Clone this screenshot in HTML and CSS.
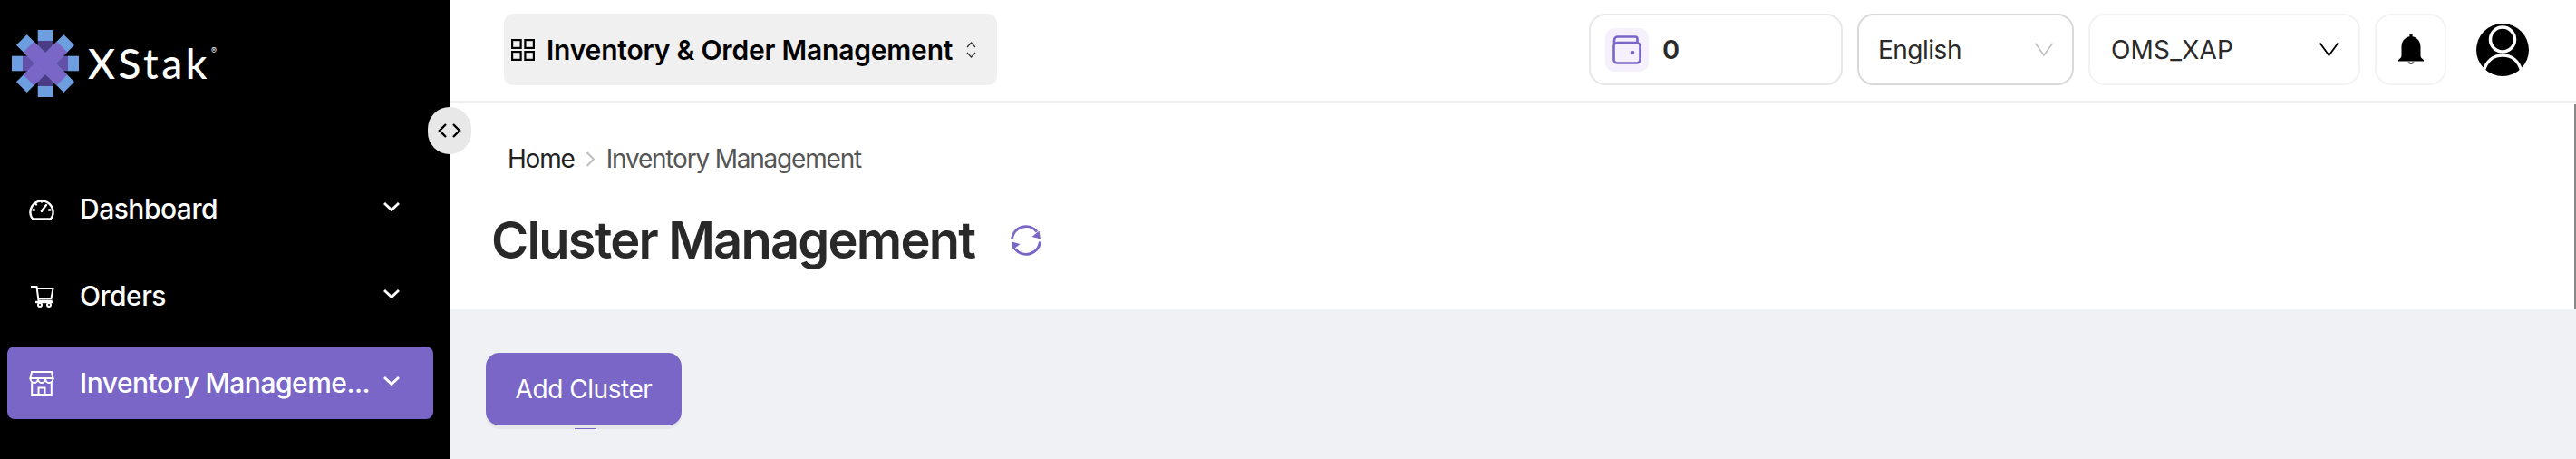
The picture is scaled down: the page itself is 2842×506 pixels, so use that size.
FILE: index.html
```html
<!DOCTYPE html>
<html lang="en">
    <head>
        <meta charset="UTF-8" />
        <title>Cluster Management</title>
        <link rel="stylesheet" href="styles.css">
    </head>
    <body>
        <div class="app">
            <aside class="sidebar">
                <div class="logo">
                    <svg class="logo-mark" width="74" height="74" viewBox="-37 -37 74 74">
                        <g id="spokes">
                            <g><rect x="-8.3" y="-37" width="16.6" height="12" fill="#6d9ee0"/><rect x="-8.3" y="-25" width="16.6" height="25" fill="#4b3d85"/></g>
                            <g transform="rotate(180)"><rect x="-8.3" y="-37" width="16.6" height="12" fill="#6d9ee0"/><rect x="-8.3" y="-25" width="16.6" height="25" fill="#4b3d85"/></g>
                            <g transform="rotate(90)"><rect x="-8.3" y="-37" width="16.6" height="12" fill="#6d9ee0"/><rect x="-8.3" y="-25" width="16.6" height="25" fill="#6350a8"/></g>
                            <g transform="rotate(270)"><rect x="-8.3" y="-37" width="16.6" height="12" fill="#6d9ee0"/><rect x="-8.3" y="-25" width="16.6" height="25" fill="#6350a8"/></g>
                        </g>
                        <g transform="rotate(45)"><rect x="-8.3" y="-37" width="16.6" height="74" fill="#6d9ee0"/><rect x="-8.3" y="-26" width="16.6" height="52" fill="#7966c7"/></g>
                        <g transform="rotate(-45)"><rect x="-8.3" y="-37" width="16.6" height="74" fill="#6d9ee0"/><rect x="-8.3" y="-26" width="16.6" height="52" fill="#7966c7"/></g>
                        <rect x="-8.3" y="-8.3" width="16.6" height="16.6" fill="#7966c7" transform="rotate(45)"/>
                    </svg>
                    <span class="logo-name">XStak</span>
                    <span class="logo-reg">®</span>
                </div>
                <nav class="nav">
                    <a class="nav-item">
                        <svg class="nav-icon" width="28" height="28" viewBox="0 0 28 28" fill="none" stroke="#fff" stroke-width="2.4" stroke-linecap="round">
                            <path d="M5.5 25.5h17c1.500 0 2-.6 2.600-1.800A12.500 12.500 0 1 0 2.900 23.700c.6 1.200 1.100 1.800 2.600 1.800z"/>
                            <path d="M14 16.500l5-6.500"/>
                            <path d="M14 5v1.500M7 8.500l1 1M4.500 15.500h1.500M22 15.500h1.500"/>
                            <circle cx="14" cy="17" r="1.300" fill="#fff" stroke="none"/>
                        </svg>
                        <span class="nav-label">Dashboard</span>
                        <svg class="nav-chevron" width="18" height="10" viewBox="0 0 18 10" fill="none" stroke="#fff" stroke-width="2.800"><path d="M1 1l8 7.500L17 1"/></svg>
                    </a>
                    <a class="nav-item">
                        <svg class="nav-icon" width="28" height="28" viewBox="0 0 28 28" fill="none" stroke="#fff" stroke-width="2">
                            <path d="M2 4h6.500l2 15.500h15"/>
                            <path d="M8.800 6h17.700l-2 11H10.400"/>
                            <path d="M7 21h19" stroke-width="2.400"/>
                            <circle cx="12" cy="24" r="2"/>
                            <circle cx="22" cy="24" r="2"/>
                        </svg>
                        <span class="nav-label">Orders</span>
                        <svg class="nav-chevron" width="18" height="10" viewBox="0 0 18 10" fill="none" stroke="#fff" stroke-width="2.800"><path d="M1 1l8 7.500L17 1"/></svg>
                    </a>
                    <a class="nav-item active">
                        <svg class="nav-icon" width="28" height="28" viewBox="0 0 28 28" fill="none" stroke="#fff" stroke-width="2">
                            <path d="M3 2h22l1.500 7H1.500z"/>
                            <path d="M1.500 9c0 3 2 5 4.200 5s4-2 4.200-4c.2 2 2 4 4.100 4s3.900-2 4.100-4c.2 2 2 4 4.200 4s4.200-2 4.200-5"/>
                            <path d="M3.200 13.500V27h21.600V13.500"/>
                            <path d="M10.500 27v-7.500h7V27"/>
                        </svg>
                        <span class="nav-label">Inventory Manageme...</span>
                        <svg class="nav-chevron" width="18" height="10" viewBox="0 0 18 10" fill="none" stroke="#fff" stroke-width="2.800"><path d="M1 1l8 7.500L17 1"/></svg>
                    </a>
                </nav>
            </aside>

            <button class="collapse">
                <svg width="26" height="16" viewBox="0 0 26 16" fill="none" stroke="#000" stroke-width="2.400"><path d="M9 1L2 8l7 7"/><path d="M17 1l7 7-7 7"/></svg>
            </button>

            <main class="main">
                <header class="topbar">
                    <div class="module">
                        <svg width="26" height="24" viewBox="0 0 26 24" fill="none" stroke="#000" stroke-width="2.200">
                            <rect x="1.100" y="1.100" width="9.500" height="8.800"/>
                            <rect x="15.400" y="1.100" width="9.500" height="8.800"/>
                            <rect x="1.100" y="14.100" width="9.500" height="8.800"/>
                            <rect x="15.400" y="14.100" width="9.500" height="8.800"/>
                        </svg>
                        <span class="module-name">Inventory &amp; Order Management</span>
                        <svg class="module-sort" width="11" height="18" viewBox="0 0 11 18" fill="none" stroke="#333" stroke-width="1.200"><path d="M1 6l4.500-5L10 6"/><path d="M1 12l4.500 5 4.500-5"/></svg>
                    </div>
                    <div class="topbar-right">
                        <div class="box wallet">
                            <span class="wallet-icon">
                                <svg width="32" height="32" viewBox="0 0 32 32" fill="none" stroke="#7966c7" stroke-width="2.600">
                                    <path d="M2 9.500V5.500C2 3 3.500 1.500 6 1.500h19c1.500 0 2.500 1 2.500 2.500v4"/>
                                    <rect x="1.500" y="8" width="29" height="22.500" rx="4"/>
                                    <circle cx="22" cy="19" r="2.300" fill="#7966c7" stroke="none"/>
                                </svg>
                            </span>
                            <span class="wallet-count">0</span>
                        </div>
                        <div class="box lang">
                            <span>English</span>
                            <svg width="20" height="15" viewBox="0 0 20 15" fill="none" stroke="#bfbfbf" stroke-width="1.600"><path d="M.6 .6L10 14 19.400 .6"/></svg>
                        </div>
                        <div class="box store">
                            <span>OMS_XAP</span>
                            <svg width="21" height="15" viewBox="0 0 21 15" fill="none" stroke="#000" stroke-width="1.800"><path d="M.6 .6L10.500 14 20.400 .6"/></svg>
                        </div>
                        <div class="box bell">
                            <svg width="28" height="36" viewBox="0 0 28 36" fill="#000">
                                <path d="M14 0c1 0 1.600.7 1.600 1.800v1.400C21.500 4.300 24.500 9 24.500 15v9c0 2 1 3.500 3.500 5v1.500H0V29c2.500-1.500 3.500-3 3.500-5v-9C3.500 9 6.500 4.300 12.400 3.200V1.800C12.400.7 13 0 14 0z"/>
                                <path d="M10.500 31.500h2a1.800 1.800 0 0 0 3 0h2a3.800 3.800 0 0 1-7 0z"/>
                            </svg>
                        </div>
                        <svg class="avatar" width="58" height="58" viewBox="0 0 58 58">
                            <circle cx="29" cy="29" r="29" fill="#000"/>
                            <circle cx="29" cy="17.500" r="13.500" fill="none" stroke="#fff" stroke-width="3.500"/>
                            <path d="M8 53C11 41 19 35 29 35s18 6 21 18" fill="none" stroke="#fff" stroke-width="3.500"/>
                        </svg>
                    </div>
                </header>

                <section class="page-head">
                    <div class="breadcrumb">
                        <span class="crumb-home">Home</span>
                        <svg width="11" height="17" viewBox="0 0 11 17" fill="none" stroke="#bdbdbd" stroke-width="2"><path d="M1.500 1l7.500 7.500L1.500 16"/></svg>
                        <span class="crumb-current">Inventory Management</span>
                    </div>
                    <div class="title-row">
                        <h1 class="title">Cluster Management</h1>
                        <svg width="34" height="34" viewBox="0 0 34 34" fill="none" stroke="#7966c7" stroke-width="3">
                            <path d="M1.500 15.500A15.500 15.500 0 0 1 29 7.500"/>
                            <path d="M32.500 18.500A15.500 15.500 0 0 1 5 26.500"/>
                            <path d="M33 15.500l-9.500-2.500 8-6.500z" fill="#7966c7" stroke="none"/>
                            <path d="M1 18.500l9.500 2.500-8 6.500z" fill="#7966c7" stroke="none"/>
                        </svg>
                    </div>
                </section>

                <section class="content">
                    <div class="actions">
                        <button class="add-btn">Add Cluster</button>
                        <span class="hidden-link"></span>
                    </div>
                </section>
            </main>

            <div class="scroll-thumb"></div>
        </div>
    </body>
</html>
```

FILE: styles.css
```css
* {
    box-sizing: border-box;
}

html,
body {
    margin: 0;
    height: 100%;
    overflow: hidden;
    font-family: "Inter", "Liberation Sans", sans-serif;
}

.app {
    display: flex;
    position: relative;
    height: 506px;
}

/* sidebar */
.sidebar {
    width: 496px;
    flex-shrink: 0;
    background-color: #000;
    color: #fff;
}

.logo {
    display: flex;
    align-items: flex-start;
    padding: 33px 0 0 13px;
    height: 107px;
}

.logo-mark {
    flex-shrink: 0;
}

.logo-name {
    margin: 10px 0 0 10px;
    font-family: "Lato", sans-serif;
    font-size: 46px;
    line-height: 54px;
    font-weight: 500;
    letter-spacing: 3.5px;
}

.logo-reg {
    margin: 18px 0 0 1px;
    font-size: 9px;
    line-height: 10px;
}

.nav {
    display: flex;
    flex-direction: column;
    gap: 16px;
    margin: 83px 18px 0 8px;
}

.nav-item {
    display: flex;
    align-items: center;
    height: 80px;
    padding: 0 37px 0 24px;
    border-radius: 8px;
    font-size: 30px;
    font-weight: 500;
    letter-spacing: -0.5px;
}

.nav-item.active {
    background-color: #7966c7;
}

.nav-icon {
    flex-shrink: 0;
    margin-right: 28px;
}

.nav-label {
    white-space: nowrap;
}

.nav-chevron {
    flex-shrink: 0;
    margin: 0 0 4px auto;
}

.collapse {
    position: absolute;
    left: 472px;
    top: 118px;
    z-index: 2;
    display: flex;
    align-items: center;
    justify-content: center;
    width: 48px;
    height: 52px;
    padding: 0;
    border: 0;
    border-radius: 24px;
    background-color: #e8e8e8;
}

/* main */
.main {
    flex: 1;
    min-width: 0;
    display: flex;
    flex-direction: column;
    background-color: #f0f1f5;
}

.topbar {
    flex-shrink: 0;
    display: flex;
    justify-content: space-between;
    align-items: flex-start;
    height: 113px;
    padding: 15px 52px 0 60px;
    background-color: #fff;
    border-bottom: 2px solid #f0f0f0;
}

.module {
    display: flex;
    align-items: center;
    width: 544px;
    height: 79px;
    padding: 0 0 0 8px;
    border-radius: 10px;
    background-color: #f0f0f0;
}

.module-name {
    margin-left: 13px;
    font-size: 30px;
    font-weight: 600;
    letter-spacing: -0.2px;
    color: #000;
    white-space: nowrap;
}

.module-sort {
    margin-left: 15px;
}

.topbar-right {
    display: flex;
    align-items: center;
    gap: 16px;
}

.box {
    display: flex;
    align-items: center;
    height: 79px;
    border: 2px solid #f3f3f3;
    border-radius: 18px;
    font-size: 28px;
    color: #2a2a2a;
}

.wallet {
    width: 280px;
    padding-left: 16px;
    border-color: #e8e8e8;
}

.wallet-icon {
    display: flex;
    align-items: center;
    justify-content: center;
    width: 48px;
    height: 48px;
    border-radius: 10px;
    background-color: #f5f0fc;
}

.wallet-count {
    margin-left: 15px;
    font-size: 29px;
    font-weight: 600;
}

.lang {
    justify-content: space-between;
    width: 239px;
    padding: 0 21px 0 21px;
    border-color: #d9d9d9;
    letter-spacing: -0.5px;
}

.store {
    justify-content: space-between;
    width: 300px;
    padding: 0 22px 0 23px;
    letter-spacing: 0.2px;
}

.bell {
    justify-content: center;
    width: 79px;
}

.avatar {
    margin-left: 17px;
}

.page-head {
    flex-shrink: 0;
    height: 228px;
    padding: 44px 0 0 46px;
    background-color: #fff;
}

.breadcrumb {
    display: flex;
    align-items: center;
    gap: 12px;
    padding-left: 18px;
    font-size: 28px;
    line-height: 36px;
    letter-spacing: -1.2px;
}

.crumb-home {
    color: #222;
}

.crumb-current {
    color: #555;
}

.title-row {
    display: flex;
    align-items: center;
    gap: 40px;
    margin-top: 36px;
}

.title {
    margin: 0;
    font-size: 56px;
    line-height: 72px;
    font-weight: 600;
    letter-spacing: -1.8px;
    color: #292929;
}

.content {
    flex: 1;
    padding: 48px 40px;
}

.actions {
    position: relative;
}

.add-btn {
    position: relative;
    z-index: 1;
    display: block;
    width: 216px;
    height: 80px;
    padding: 0;
    border: 0;
    border-radius: 15px;
    background-color: #7966c7;
    box-shadow: 0 4px 0 #e6e6ea;
    color: #fff;
    font-family: inherit;
    font-size: 28px;
    letter-spacing: -0.45px;
}

/* the bit of a link that pokes out under the button */
.hidden-link {
    position: absolute;
    left: 98px;
    top: 83px;
    z-index: 2;
    width: 24px;
    height: 1px;
    background-color: #7966c7;
}

.scroll-thumb {
    position: absolute;
    right: 0;
    top: 115px;
    width: 2px;
    height: 226px;
    background-color: #888;
}
```
